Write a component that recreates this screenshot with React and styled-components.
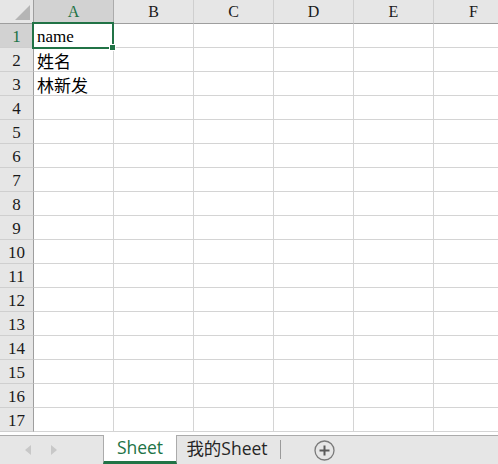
import React from 'react'
import styled, { createGlobalStyle } from 'styled-components'

const GlobalStyle = createGlobalStyle`
html, body {
    margin: 0;
    padding: 0;
    background: #ffffff;
}
#root {
    width: 498px;
    height: 464px;
    overflow: hidden;
}
`

const Page = styled.div`
display: flex;
flex-direction: column;
width: 498px;
height: 464px;
overflow: hidden;
background: #ffffff;
`

const SheetArea = styled.div`
position: relative;
flex: 1;
overflow: hidden;
`

const Grid = styled.div`
display: grid;
grid-template-columns: 34px repeat(6, 80px);
grid-template-rows: 24px repeat(17, 24px);
width: 514px;
`

const Corner = styled.div`
position: relative;
background: #e6e6e6;
border-right: 1px solid #9e9e9e;
border-bottom: 1px solid #9e9e9e;
box-sizing: border-box;

&::after {
    content: '';
    position: absolute;
    right: 3px;
    bottom: 3px;
    width: 0;
    height: 0;
    border-left: 15px solid transparent;
    border-bottom: 15px solid #b5b5b5;
}
`

const ColHead = styled.div`
display: flex;
align-items: center;
justify-content: center;
background: ${p => (p.active ? '#d2d2d2' : '#e6e6e6')};
color: ${p => (p.active ? '#217346' : '#1a1a1a')};
border-right: 1px solid ${p => (p.active ? '#ababab' : '#cfcfcf')};
border-bottom: 1px solid #9e9e9e;
box-sizing: border-box;
font-family: "Liberation Serif", "Noto Sans CJK SC", serif;
font-size: 16px;
padding-top: 1px;
`

const RowHead = styled.div`
display: flex;
align-items: center;
justify-content: center;
background: ${p => (p.active ? '#d2d2d2' : '#e6e6e6')};
color: ${p => (p.active ? '#217346' : '#1a1a1a')};
border-right: 1px solid #9e9e9e;
border-bottom: 1px solid #cfcfcf;
box-sizing: border-box;
font-family: "Liberation Serif", "Noto Sans CJK SC", serif;
font-size: 17px;
padding-top: 2px;
`

const Cell = styled.div`
display: flex;
align-items: center;
padding: 2px 0 0 3px;
border-right: 1px solid #d4d4d4;
border-bottom: 1px solid #d4d4d4;
box-sizing: border-box;
font-family: "Liberation Serif", "Noto Sans CJK SC", serif;
font-size: 17px;
color: #000000;
white-space: nowrap;
overflow: hidden;
`

const Selection = styled.div`
position: absolute;
left: 32px;
top: 22px;
width: 82px;
height: 27px;
border: 2px solid #217346;
box-sizing: border-box;
pointer-events: none;

&::after {
    content: '';
    position: absolute;
    right: -4px;
    bottom: -4px;
    width: 5px;
    height: 5px;
    background: #217346;
    border: 1px solid #ffffff;
}
`

const TabBar = styled.div`
display: flex;
align-items: stretch;
height: 29px;
background: #e6e6e6;
border-top: 1px solid #ababab;
box-sizing: border-box;
font-family: "Open Sans", "Noto Sans CJK SC", sans-serif;
`

const Nav = styled.div`
display: flex;
align-items: center;
gap: 20px;
width: 103px;
padding-left: 25px;
box-sizing: border-box;
`

const Arrow = styled.span`
width: 0;
height: 0;
border-top: 5px solid transparent;
border-bottom: 5px solid transparent;
${p => (p.left ? 'border-right: 6px solid #c8c8c8;' : 'border-left: 6px solid #c8c8c8;')}
`

const Tab = styled.div`
display: flex;
align-items: center;
justify-content: center;
width: ${p => p.width}px;
margin-top: ${p => (p.active ? '-1px' : '0')};
background: ${p => (p.active ? '#ffffff' : 'transparent')};
color: ${p => (p.active ? '#217346' : '#262626')};
border-left: ${p => (p.active ? '1px solid #ababab' : 'none')};
border-right: ${p => (p.active ? '1px solid #ababab' : 'none')};
border-bottom: ${p => (p.active ? '3px solid #217346' : '3px solid transparent')};
box-sizing: border-box;
font-size: 17.5px;
padding-bottom: 3px;
`

const Divider = styled.div`
align-self: center;
width: 1px;
height: 19px;
margin: 0 0 2px 3px;
background: #9a9a9a;
`

const AddButton = styled.div`
display: flex;
align-items: center;
margin-left: 33px;
`

const cols = ['A', 'B', 'C', 'D', 'E', 'F']
const data = { 1: 'name', 2: '姓名', 3: '林新发' }
const rows = Array.from({ length: 17 }, (_, i) => i + 1)

const App = () => {
    return (
        <Page>
            <GlobalStyle />
            <SheetArea>
                <Grid>
                    <Corner />
                    {cols.map(c => (
                        <ColHead key={c} active={c === 'A'}>{c}</ColHead>
                    ))}
                    {rows.map(r => (
                        <React.Fragment key={r}>
                            <RowHead active={r === 1}>{r}</RowHead>
                            {cols.map(c => (
                                <Cell key={c}>{c === 'A' ? data[r] : ''}</Cell>
                            ))}
                        </React.Fragment>
                    ))}
                </Grid>
                <Selection />
            </SheetArea>
            <TabBar>
                <Nav>
                    <Arrow left />
                    <Arrow />
                </Nav>
                <Tab active width={74}>Sheet</Tab>
                <Tab width={100}>我的Sheet</Tab>
                <Divider />
                <AddButton>
                    <svg width="21" height="21" viewBox="0 0 21 21">
                        <circle cx="10.5" cy="10.5" r="9.5" fill="none" stroke="#7a7a7a" strokeWidth="1.3" />
                        <path d="M10.5 5.5v10M5.5 10.5h10" stroke="#5a5a5a" strokeWidth="2" />
                    </svg>
                </AddButton>
            </TabBar>
        </Page>
    )
}

export default App
